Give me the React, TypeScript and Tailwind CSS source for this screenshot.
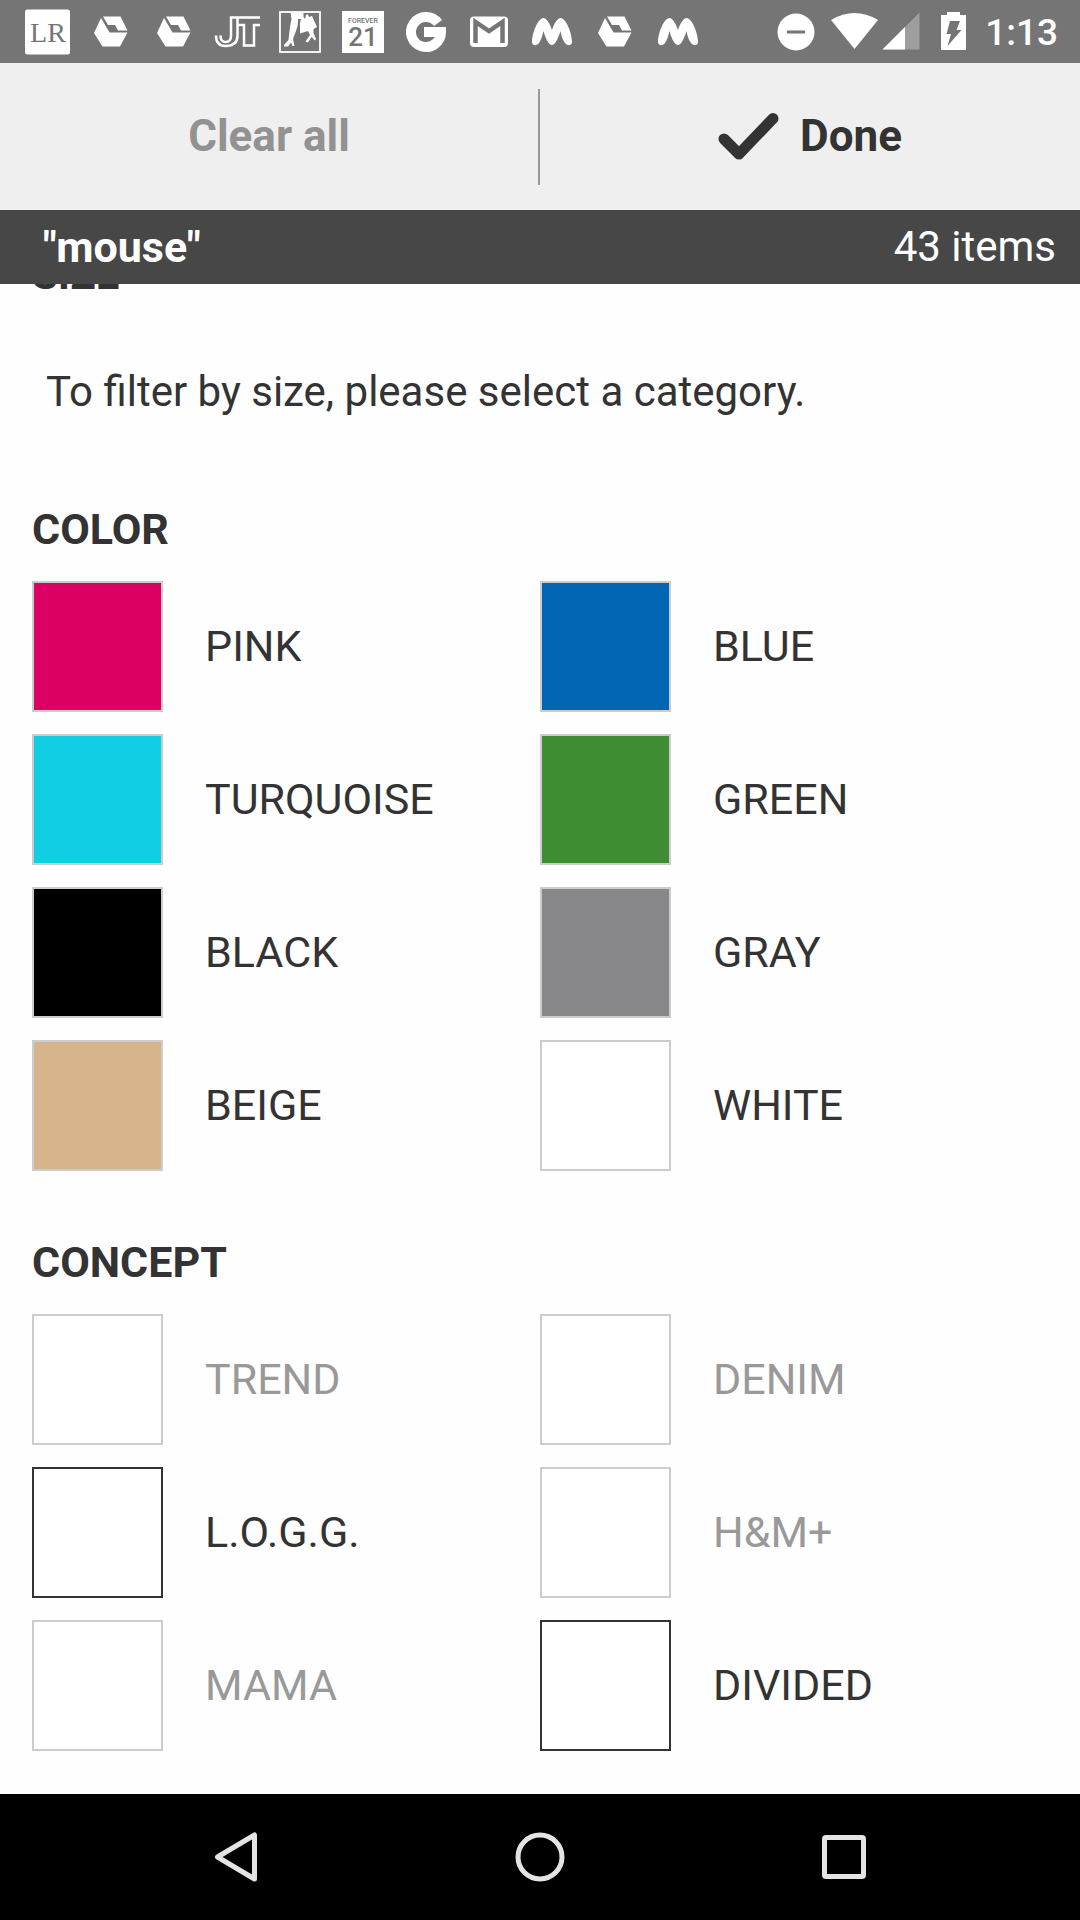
import React from "react";

const apps = ["lr", "box", "box", "jt", "shoe", "f21", "g", "mail", "m", "box", "m"];

function AppIcon({ name }: { name: string }) {
  const props = { width: 48, height: 48, viewBox: "0 0 48 48", fill: "white" };
  switch (name) {
    case "lr":
      return (
        <svg {...props}>
          <rect x="1" y="1.5" width="45" height="45" rx="2.5" />
          <text x="24" y="34" textAnchor="middle" fontSize="28" fontFamily="Liberation Serif, serif" fill="#757575">LR</text>
        </svg>
      );
    case "box":
      return (
        <svg {...props}>
          <path d="M14 10 L22.5 24.5 L40.5 24.5 L33 38.5 H15.500 L7 25 Z" />
          <path d="M16 8.500 H33.500 L40.500 22.500 H31 L28 17 H21 Z" />
        </svg>
      );
    case "jt":
      return (
        <svg {...props} fill="none" stroke="white" strokeWidth="2.500">
          <path d="M47 9.500 H18 V27.500 Q18 34 12.500 34 Q7.500 34 7.500 27.500 M3 27.500 Q3 38 12.500 38 Q24.500 38 24.500 27.500 V17 H31 V37.500 H41 V17 H47 M24.500 9.500 V17" />
        </svg>
      );
    case "shoe":
      return (
        <svg {...props}>
          <rect x="4" y="4" width="40" height="40" fill="none" stroke="white" strokeWidth="1.800" />
          <path d="M14.500 4.500 H27.500 L27.500 9 L29 11 L30 7 Q32 5 33 9 L36 8 L41 19 L37.500 21 L37.500 25 L40 31 L39 32.500 L35.500 29 L32 34.500 L29.500 33.500 L34 27 L32 23 L24 25.500 V15 L25 11 L22 11 Q22.500 17 20 23 L17 31 L18.500 38 L16.500 38 L15 34.500 L12 38.500 H8 V37 L12.500 32 L14 19 L15.500 11 Z" />
        </svg>
      );
    case "f21":
      return (
        <svg {...props}>
          <rect x="3" y="3" width="42" height="42" />
          <text x="24" y="15" textAnchor="middle" fontSize="7" fontWeight="500" fontFamily="Roboto, sans-serif" fill="#757575">FOREVER</text>
          <text x="24" y="38" textAnchor="middle" fontSize="26" fontWeight="500" fontFamily="Roboto, sans-serif" fill="#757575">21</text>
        </svg>
      );
    case "g":
      return (
        <svg {...props} fill="none" stroke="white" strokeWidth="10">
          <path d="M36 15 A15 15 0 1 0 39 24 H22" />
        </svg>
      );
    case "mail":
      return (
        <svg {...props}>
          <rect x="5" y="8.500" width="38" height="30.500" rx="4" />
          <path d="M10.500 35 V14 L24 23 L37.500 14 V35" fill="none" stroke="#757575" strokeWidth="4.500" />
        </svg>
      );
    default:
      return (
        <svg {...props}>
          <path d="M4 34 C4 25 10 10 15.500 10 C18.500 10 22 16 24 22 C26 16 29.500 10 32.500 10 C38 10 44 25 44 34 C44 38 39 38 37 35 C35 32 33.500 29 32.500 23 C30 31 27 37 24 37 C21 37 17.500 31 15.500 23 C14 29 13 32 11 35 C9 38 4 38 4 34 Z" />
        </svg>
      );
  }
}

function StatusBar() {
  return (
    <div className="flex h-[63px] items-center bg-[#757575] pl-4 pr-[22px]">
      <div className="flex flex-1">
        {apps.map((name, i) => (
          <span key={i} className="flex w-[63px] justify-center">
            <AppIcon name={name} />
          </span>
        ))}
      </div>
      <svg width="192" height="40" viewBox="0 0 192 40" fill="white">
        <circle cx="21" cy="20" r="18.500" />
        <rect x="12" y="18.500" width="18" height="3" fill="#757575" />
        <path d="M56 8 Q79.500 -6 103 8 L79.500 37 Z" />
        <path d="M107.500 37.500 L144.500 0.500 V37.500 Z" opacity="0.300" />
        <path d="M107.500 37.500 L130 15 V37.500 Z" />
        <path d="M166 3 H172 V0 H185 V3 H191 V38 H166 Z" />
        <path d="M175 9 H185 L181.500 18 H186.500 L172.500 34 L176 22 H171.500 Z" fill="#757575" />
      </svg>
      <time className="ml-[18px] pt-0.5 text-[37px] font-medium leading-[40px] text-white">1:13</time>
    </div>
  );
}

type Option = { label: string; color?: string; state?: "off" | "on" };

const colors: Option[] = [
  { label: "PINK", color: "bg-[#dd0063]" },
  { label: "BLUE", color: "bg-[#0065b3]" },
  { label: "TURQUOISE", color: "bg-[#12cee3]" },
  { label: "GREEN", color: "bg-[#408c34]" },
  { label: "BLACK", color: "bg-black" },
  { label: "GRAY", color: "bg-[#878789]" },
  { label: "BEIGE", color: "bg-[#d5b48c]" },
  { label: "WHITE", color: "bg-white" },
];

const concepts: Option[] = [
  { label: "TREND", state: "off" },
  { label: "DENIM", state: "off" },
  { label: "L.O.G.G.", state: "on" },
  { label: "H&M+", state: "off" },
  { label: "MAMA", state: "off" },
  { label: "DIVIDED", state: "on" },
];

function OptionGroup({ title, options }: { title: string; options: Option[] }) {
  return (
    <section>
      <h2 className="mb-[30px] text-[43px] font-bold leading-[44px]">{title}</h2>
      <div className="grid grid-cols-2 gap-y-[22px]">
        {options.map(({ label, color = "bg-white", state }) => (
          <label key={label} className={`flex items-center gap-[42px] text-[43px] leading-[44px] ${state === "off" ? "text-[#999999]" : "text-[#333333]"}`}>
            <input
              type="checkbox"
              disabled={state === "off"}
              className={`size-[131px] shrink-0 appearance-none border-2 ${color} ${state === "on" ? "border-[#333333]" : "border-[#cccccc]"}`}
            />
            <span className="pb-0.5">{label}</span>
          </label>
        ))}
      </div>
    </section>
  );
}

export default function App() {
  return (
    <div className="flex min-h-screen flex-col bg-[#fefefe] font-[Roboto,sans-serif] text-[#333333]">
      <header>
        <StatusBar />
        <div className="grid h-[147px] grid-cols-2 items-center bg-[#efefef] text-[44px] font-bold leading-[44px]">
          <button type="button" className="h-24 border-r-2 border-[#999999] pb-0.5 text-[#929292]">Clear all</button>
          <button type="button" className="flex items-center justify-center gap-5 pb-0.5">
            <svg width="62" height="48" viewBox="0 0 62 48" fill="none" stroke="#333333" strokeWidth="11" strokeLinecap="round" strokeLinejoin="round">
              <path d="M6 27 L21 42 L55 6.500" />
            </svg>
            Done
          </button>
        </div>
        <div className="flex h-[74px] items-center justify-between bg-[#474747] pl-[43px] pr-6 leading-[44px] text-white">
          <span className="text-[43px] font-bold">"mouse"</span>
          <span className="text-[42px]">43 items</span>
        </div>
      </header>
      <main className="flex-1 overflow-hidden px-8 pb-[43px]">
        <h2 className="-mt-[31px] text-[42px] font-bold leading-[44px]">SIZE</h2>
        <p className="mb-[93px] mt-[73px] pl-[14px] text-[42px] leading-[44px]">To filter by size, please select a category.</p>
        <div className="flex flex-col gap-[69px]">
          <OptionGroup title="COLOR" options={colors} />
          <OptionGroup title="CONCEPT" options={concepts} />
        </div>
      </main>
      <nav className="flex h-[126px] items-center justify-center gap-[243px] bg-black">
        <button type="button" aria-label="Back">
          <svg width="60" height="60" viewBox="0 0 60 60" fill="none" stroke="#e4e4e4" strokeWidth="5" strokeLinejoin="round">
            <path d="M10.500 30 L47.500 8 V52 Z" />
          </svg>
        </button>
        <button type="button" aria-label="Home">
          <svg width="60" height="60" viewBox="0 0 60 60" fill="none" stroke="#e4e4e4" strokeWidth="5">
            <circle cx="30" cy="30" r="22" />
          </svg>
        </button>
        <button type="button" aria-label="Recent apps">
          <svg width="60" height="60" viewBox="0 0 60 60" fill="none" stroke="#e4e4e4" strokeWidth="5">
            <rect x="11.500" y="10.500" width="39" height="39" rx="1.500" />
          </svg>
        </button>
      </nav>
    </div>
  );
}
